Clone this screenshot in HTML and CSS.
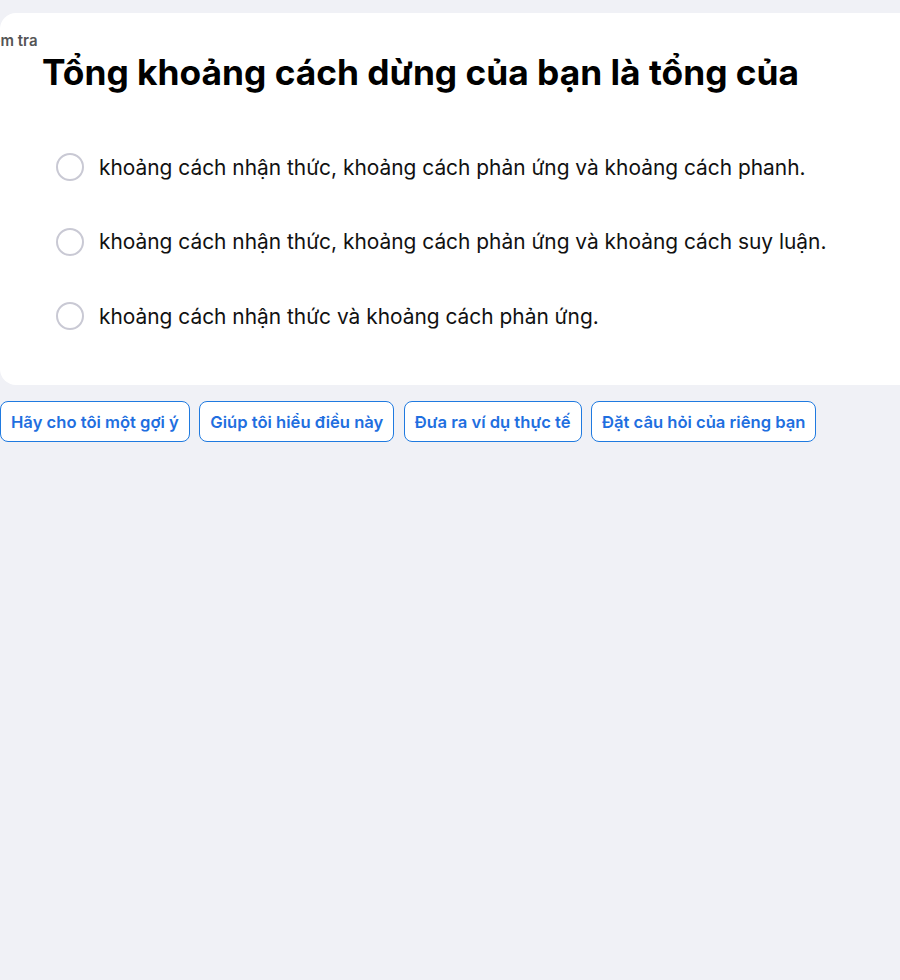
FILE: index.html
```html
<!DOCTYPE html>
<html lang="vi">
<head>
<meta charset="utf-8">
<link rel="stylesheet" href="styles.css">
</head>
<body>
<div class="page">
  <div class="card">
    <div class="label">Kiểm tra</div>
    <h1 class="title">Tổng khoảng cách dừng của bạn là tổng của</h1>
    <div class="options">
      <div class="option"><span class="radio"></span><span class="opt-text">khoảng cách nhận thức, khoảng cách phản ứng và khoảng cách phanh.</span></div>
      <div class="option"><span class="radio"></span><span class="opt-text">khoảng cách nhận thức, khoảng cách phản ứng và khoảng cách suy luận.</span></div>
      <div class="option"><span class="radio"></span><span class="opt-text">khoảng cách nhận thức và khoảng cách phản ứng.</span></div>
    </div>
  </div>
  <div class="chips">
    <button class="chip">Hãy cho tôi một gợi ý</button>
    <button class="chip">Giúp tôi hiểu điều này</button>
    <button class="chip">Đưa ra ví dụ thực tế</button>
    <button class="chip">Đặt câu hỏi của riêng bạn</button>
  </div>
</div>
</body>
</html>
```
FILE: styles.css
```css
html, body {
  margin: 0;
  padding: 0;
  background: #f0f1f6;
  overflow: hidden;
  width: 900px;
  height: 980px;
}
body {
  font-family: "Inter", "Noto Sans", sans-serif;
  color: #111;
}
.page {
  padding-top: 13px;
}
.card {
  background: #fff;
  border-radius: 16px;
  width: 920px;
  height: 372px;
  box-sizing: border-box;
  padding-top: 18px;
}
.label {
  margin-left: -23px;
  font-size: 15px;
  font-weight: 600;
  color: #555;
  line-height: 20px;
}
.title {
  margin: 0 0 0 42px;
  font-size: 35.3px;
  font-weight: 700;
  line-height: 44px;
  color: #000;
  letter-spacing: 0;
}
.options {
  margin-top: 58px;
  margin-left: 56px;
  display: flex;
  flex-direction: column;
  gap: 46.5px;
}
.option {
  display: flex;
  align-items: center;
  gap: 15px;
  height: 28px;
}
.radio {
  width: 24px;
  height: 24px;
  border: 2px solid #c9c9d4;
  border-radius: 50%;
  flex: none;
}
.opt-text {
  font-size: 20.9px;
  color: #111;
}
.chips {
  display: flex;
  gap: 9.5px;
  margin-top: 16px;
}
.chip {
  font-family: "Inter", "Noto Sans", sans-serif;
  height: 41px;
  padding: 0 10px;
  background: #fff;
  border: 1px solid #1f7ae0;
  border-radius: 8px;
  color: #1f6fe0;
  font-size: 16.6px;
  font-weight: 600;
}
```
